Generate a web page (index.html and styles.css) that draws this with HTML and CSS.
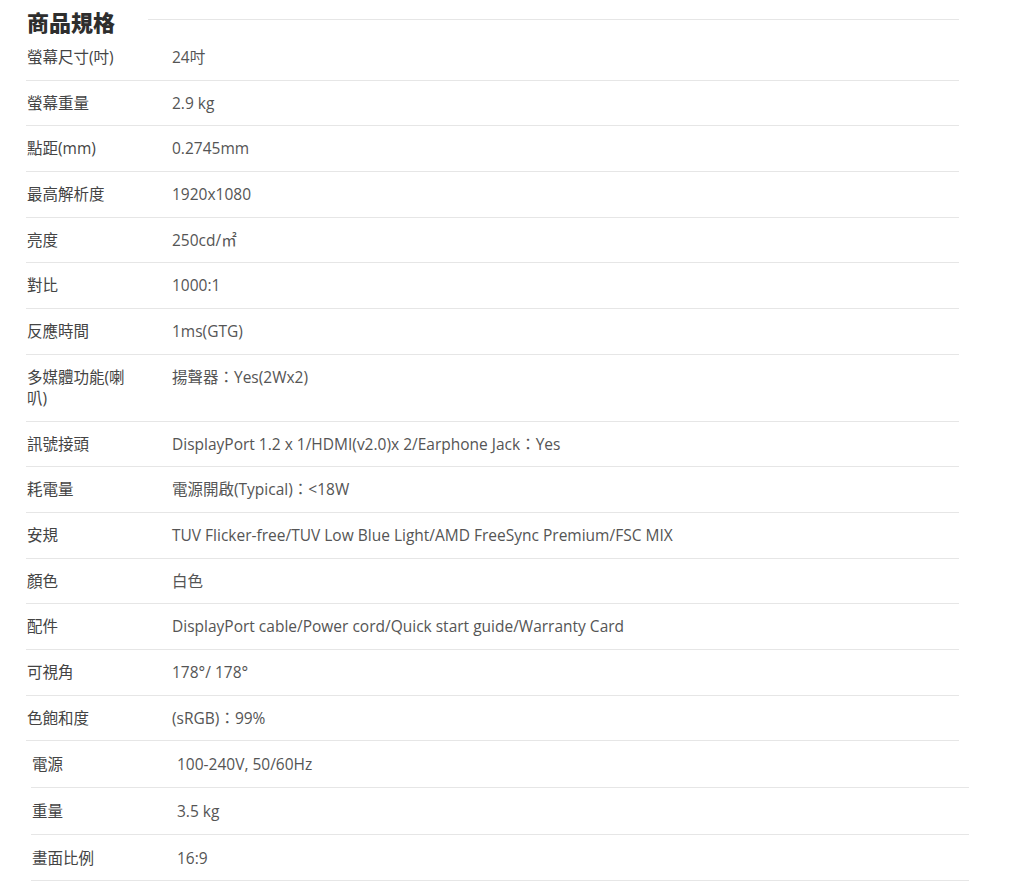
FILE: index.html
```html
<!DOCTYPE html>
<html lang="zh-Hant">
<head>
    <meta charset="UTF-8">
    <meta name="viewport" content="width=device-width, initial-scale=1.0">
    <title>商品規格</title>
    <link rel="stylesheet" href="styles.css">
</head>
<body>
    <div class="spec">
        <div class="spec-head">
            <h2>商品規格</h2>
            <span class="head-line"></span>
        </div>

        <table class="spec-table">
            <tr><td class="label">螢幕尺寸(吋)</td><td class="value">24吋</td></tr>
            <tr><td class="label">螢幕重量</td><td class="value">2.9 kg</td></tr>
            <tr><td class="label">點距(mm)</td><td class="value">0.2745mm</td></tr>
            <tr><td class="label">最高解析度</td><td class="value">1920x1080</td></tr>
            <tr><td class="label">亮度</td><td class="value">250cd/㎡</td></tr>
            <tr><td class="label">對比</td><td class="value">1000:1</td></tr>
            <tr><td class="label">反應時間</td><td class="value">1ms(GTG)</td></tr>
            <tr><td class="label">多媒體功能(喇叭)</td><td class="value">揚聲器：Yes(2Wx2)</td></tr>
            <tr><td class="label">訊號接頭</td><td class="value">DisplayPort 1.2 x 1/HDMI(v2.0)x 2/Earphone Jack：Yes</td></tr>
            <tr><td class="label">耗電量</td><td class="value">電源開啟(Typical)：&lt;18W</td></tr>
            <tr><td class="label">安規</td><td class="value">TUV Flicker-free/TUV Low Blue Light/AMD FreeSync Premium/FSC MIX</td></tr>
            <tr><td class="label">顏色</td><td class="value">白色</td></tr>
            <tr><td class="label">配件</td><td class="value">DisplayPort cable/Power cord/Quick start guide/Warranty Card</td></tr>
            <tr><td class="label">可視角</td><td class="value">178°/ 178°</td></tr>
            <tr><td class="label">色飽和度</td><td class="value">(sRGB)：99%</td></tr>
        </table>

        <!-- extra rows appended by the shop, slightly offset -->
        <table class="spec-table extra">
            <tr><td class="label">電源</td><td class="value">100-240V, 50/60Hz</td></tr>
            <tr><td class="label">重量</td><td class="value">3.5 kg</td></tr>
            <tr><td class="label">畫面比例</td><td class="value">16:9</td></tr>
        </table>
    </div>
</body>
</html>
```

FILE: styles.css
```css
* {
    margin: 0;
    padding: 0;
    box-sizing: border-box;
}

body {
    font-family: 'Open Sans', 'Noto Sans CJK TC', sans-serif;
    background: #ffffff;
    color: #555555;
}

.spec {
    width: 959px;
    padding-left: 26px;
}

.spec-head {
    display: flex;
    align-items: center;
    height: 35px;
    padding-top: 8px;
}

.spec-head h2 {
    font-family: 'Noto Sans CJK TC', sans-serif;
    font-size: 22px;
    font-weight: 900;
    color: #2e2e2e;
    line-height: 27px;
    padding-left: 1px;
}

.head-line {
    flex: 1;
    height: 1px;
    margin-left: 33px;
    margin-top: -4px;
    background: #e6e6e6;
}

.spec-table {
    width: 100%;
    border-collapse: collapse;
    font-size: 15.5px;
    line-height: 21px;
}

.spec-table td {
    padding: 12px 0 11.7px;
    border-bottom: 1px solid #e6e6e6;
    vertical-align: top;
}

.spec-table .label {
    width: 146px;
    padding-left: 1px;
    padding-right: 34px;
    color: #444444;
}

.spec-table .value {
    color: #555555;
}

.spec-table.extra {
    width: 938px;
    margin-left: 5px;
}

.spec-table.extra td {
    padding-top: 13px;
}
```
